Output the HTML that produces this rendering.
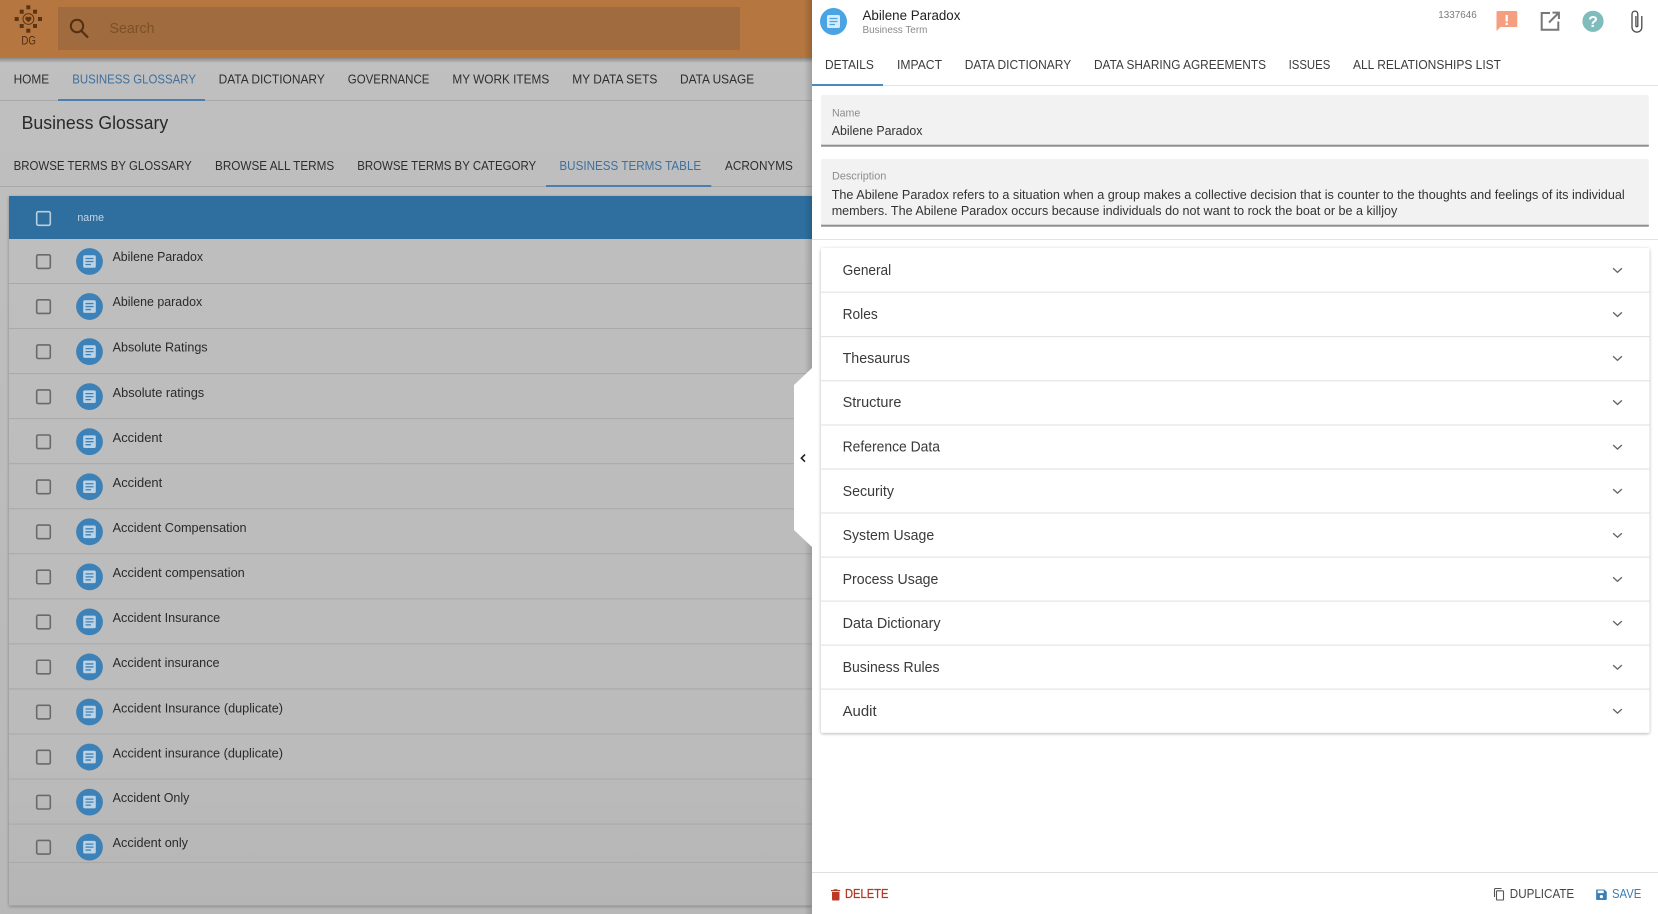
<!DOCTYPE html>
<html lang="en"><head><meta charset="utf-8"><title>Business Glossary</title>
<style>
html,body{margin:0;padding:0;background:#fff;width:1658px;height:914px;overflow:hidden}
svg{display:block;filter:blur(.3px)}
text{font-family:"Liberation Sans",sans-serif}
.nav{font-size:13px;fill:#2e2e2e}
.blue{fill:#3f709f}
.row{font-size:13px;fill:#2a2a2a}
.acc{font-size:14.5px;fill:#3a3a3a}
.tab{font-size:13px;fill:#3c3c3c}
.lab{font-size:11px;fill:#8c8c8c}
.val{font-size:13px;fill:#333}
</style></head><body>
<svg xmlns="http://www.w3.org/2000/svg" width="1658" height="914" viewBox="0 0 1658 914">
<defs>
<linearGradient id="pg" x1="0" y1="0" x2="0" y2="1"><stop offset="0" stop-color="#c0c0c0"/><stop offset="1" stop-color="#b8b8b8"/></linearGradient>
<linearGradient id="cd" x1="0" y1="0" x2="0" y2="1"><stop offset="0" stop-color="#bebebe"/><stop offset=".8" stop-color="#bbbbbb"/><stop offset="1" stop-color="#b5b5b5"/></linearGradient>
<linearGradient id="sh" x1="0" y1="0" x2="1" y2="0"><stop offset="0" stop-color="#000" stop-opacity="0"/><stop offset="1" stop-color="#000" stop-opacity=".16"/></linearGradient>
<linearGradient id="hs" x1="0" y1="0" x2="0" y2="1"><stop offset="0" stop-color="#000" stop-opacity=".28"/><stop offset="1" stop-color="#000" stop-opacity="0"/></linearGradient>
<filter id="cs" x="-2%" y="-2%" width="104%" height="104%"><feDropShadow dx="0" dy="1" stdDeviation="1.5" flood-color="#000" flood-opacity=".3"/></filter>
<symbol id="doc" viewBox="0 0 28 28" overflow="visible">
<circle cx="14" cy="14" r="13.4" fill="#3c82b8"/>
<rect x="7.7" y="7.7" width="12.6" height="12.6" rx="1.6" fill="#bdd3e4"/>
<path d="M10 11h8M10 14h8M10 17h5.5" stroke="#3c82b8" stroke-width="1.3" fill="none"/>
</symbol>
<symbol id="chev" viewBox="0 0 12 7" overflow="visible"><path d="M1.2 1.2L6 5.6l4.8-4.4" fill="none" stroke="#666" stroke-width="1.5"/></symbol>
</defs>

<!-- left background -->
<rect x="0" y="0" width="812" height="914" fill="url(#pg)"/>
<!-- app bar -->
<rect x="0" y="0" width="812" height="58" fill="#b5763f"/>
<rect x="0" y="58" width="812" height="5" fill="url(#hs)"/>
<rect x="58" y="7" width="682" height="43" fill="#a06b3e"/>
<!-- logo -->
<g fill="#5a3515">
<rect x="26.3" y="5.3" width="4" height="4"/><rect x="26.3" y="28.7" width="4" height="4"/>
<rect x="14.7" y="17" width="4" height="4"/><rect x="38" y="17" width="4" height="4"/>
<rect x="19.7" y="9.7" width="4" height="4"/><rect x="33" y="9.7" width="4" height="4"/>
<rect x="19.7" y="24" width="4" height="4"/><rect x="33" y="24" width="4" height="4"/>
<path d="M28.4 22c-2.2-1.4-3-2.7-3-3.8 0-1 .8-1.6 1.5-1.6.7 0 1.2.4 1.5 1 .3-.6.8-1 1.5-1 .7 0 1.5.6 1.5 1.6 0 1.1-.8 2.4-3 3.8z"/>
</g>
<circle cx="28.4" cy="19" r="5.4" fill="none" stroke="#5a3515" stroke-width="1"/>
<text x="21.4" y="44.6" font-size="11.5" fill="#4a2c12" textLength="14.4" lengthAdjust="spacingAndGlyphs">DG</text>
<!-- search -->
<circle cx="77" cy="26" r="6.2" fill="none" stroke="#552f10" stroke-width="2"/>
<path d="M81.5 31l6.5 6.5" stroke="#552f10" stroke-width="2.2" fill="none"/>
<text x="109.5" y="33" font-size="14.5" fill="#7d5029" textLength="45" lengthAdjust="spacingAndGlyphs">Search</text>

<!-- primary nav -->
<rect x="0" y="100" width="812" height="1" fill="#a9a9a9"/>
<rect x="58" y="99" width="147" height="2" fill="#4a7fb0"/>
<g class="nav">
<text class="nav" x="13.6" y="83.7" textLength="35.6" lengthAdjust="spacingAndGlyphs">HOME</text>
<text class="nav blue" x="72.2" y="83.7" textLength="123.8" lengthAdjust="spacingAndGlyphs">BUSINESS GLOSSARY</text>
<text class="nav" x="218.6" y="83.7" textLength="106.2" lengthAdjust="spacingAndGlyphs">DATA DICTIONARY</text>
<text class="nav" x="347.8" y="83.7" textLength="81.6" lengthAdjust="spacingAndGlyphs">GOVERNANCE</text>
<text class="nav" x="452.4" y="83.7" textLength="96.8" lengthAdjust="spacingAndGlyphs">MY WORK ITEMS</text>
<text class="nav" x="572.2" y="83.7" textLength="85.2" lengthAdjust="spacingAndGlyphs">MY DATA SETS</text>
<text class="nav" x="680" y="83.7" textLength="74.2" lengthAdjust="spacingAndGlyphs">DATA USAGE</text>
</g>
<text x="21.6" y="128.8" font-size="18" fill="#2a2a2a" textLength="146.6" lengthAdjust="spacingAndGlyphs">Business Glossary</text>

<!-- secondary tabs -->
<rect x="0" y="186" width="812" height="1" fill="#a9a9a9"/>
<rect x="546" y="185" width="165.3" height="2" fill="#4a7fb0"/>
<text class="nav" x="13.6" y="170.1" textLength="178.2" lengthAdjust="spacingAndGlyphs">BROWSE TERMS BY GLOSSARY</text>
<text class="nav" x="215" y="170.1" textLength="119.2" lengthAdjust="spacingAndGlyphs">BROWSE ALL TERMS</text>
<text class="nav" x="357.2" y="170.1" textLength="179" lengthAdjust="spacingAndGlyphs">BROWSE TERMS BY CATEGORY</text>
<text class="nav blue" x="559.4" y="170.1" textLength="141.8" lengthAdjust="spacingAndGlyphs">BUSINESS TERMS TABLE</text>
<text class="nav" x="725" y="170.1" textLength="67.9" lengthAdjust="spacingAndGlyphs">ACRONYMS</text>

<!-- table -->
<rect x="9" y="196" width="803" height="709.5" fill="url(#cd)" filter="url(#cs)"/>
<rect x="9" y="196" width="803" height="43" fill="#2f6f9f"/>
<rect x="36.7" y="211.7" width="13.6" height="13.6" rx="1.5" fill="none" stroke="#b9cfe0" stroke-width="1.6"/>
<text x="77.4" y="221" font-size="11" fill="#c6d6e4" textLength="26.6" lengthAdjust="spacingAndGlyphs">name</text>

<g id="rows">
<g><rect x="36.7" y="254.8" width="13.6" height="13.6" rx="1.5" fill="none" stroke="#6a6a6a" stroke-width="1.6"/><use href="#doc" x="75.5" y="247.5" width="28" height="28"/><text class="row" x="112.6" y="261.1" textLength="90.4" lengthAdjust="spacingAndGlyphs">Abilene Paradox</text><rect x="9" y="283" width="803" height="1" fill="#a8a8a8"/></g>
<g transform="translate(0,45.05)"><rect x="36.7" y="254.8" width="13.6" height="13.6" rx="1.5" fill="none" stroke="#6a6a6a" stroke-width="1.6"/><use href="#doc" x="75.5" y="247.5" width="28" height="28"/><text class="row" x="112.6" y="261.1" textLength="89.6" lengthAdjust="spacingAndGlyphs">Abilene paradox</text><rect x="9" y="283" width="803" height="1" fill="#a8a8a8"/></g>
<g transform="translate(0,90.1)"><rect x="36.7" y="254.8" width="13.6" height="13.6" rx="1.5" fill="none" stroke="#6a6a6a" stroke-width="1.6"/><use href="#doc" x="75.5" y="247.5" width="28" height="28"/><text class="row" x="112.6" y="261.4" textLength="95" lengthAdjust="spacingAndGlyphs">Absolute Ratings</text><rect x="9" y="283" width="803" height="1" fill="#a8a8a8"/></g>
<g transform="translate(0,135.15)"><rect x="36.7" y="254.8" width="13.6" height="13.6" rx="1.5" fill="none" stroke="#6a6a6a" stroke-width="1.6"/><use href="#doc" x="75.5" y="247.5" width="28" height="28"/><text class="row" x="112.6" y="261.8" textLength="91.6" lengthAdjust="spacingAndGlyphs">Absolute ratings</text><rect x="9" y="283" width="803" height="1" fill="#a8a8a8"/></g>
<g transform="translate(0,180.2)"><rect x="36.7" y="254.8" width="13.6" height="13.6" rx="1.5" fill="none" stroke="#6a6a6a" stroke-width="1.6"/><use href="#doc" x="75.5" y="247.5" width="28" height="28"/><text class="row" x="112.6" y="261.8" textLength="49.6" lengthAdjust="spacingAndGlyphs">Accident</text><rect x="9" y="283" width="803" height="1" fill="#a8a8a8"/></g>
<g transform="translate(0,225.25)"><rect x="36.7" y="254.8" width="13.6" height="13.6" rx="1.5" fill="none" stroke="#6a6a6a" stroke-width="1.6"/><use href="#doc" x="75.5" y="247.5" width="28" height="28"/><text class="row" x="112.6" y="261.8" textLength="49.6" lengthAdjust="spacingAndGlyphs">Accident</text><rect x="9" y="283" width="803" height="1" fill="#a8a8a8"/></g>
<g transform="translate(0,270.3)"><rect x="36.7" y="254.8" width="13.6" height="13.6" rx="1.5" fill="none" stroke="#6a6a6a" stroke-width="1.6"/><use href="#doc" x="75.5" y="247.5" width="28" height="28"/><text class="row" x="112.6" y="261.8" textLength="134" lengthAdjust="spacingAndGlyphs">Accident Compensation</text><rect x="9" y="283" width="803" height="1" fill="#a8a8a8"/></g>
<g transform="translate(0,315.35)"><rect x="36.7" y="254.8" width="13.6" height="13.6" rx="1.5" fill="none" stroke="#6a6a6a" stroke-width="1.6"/><use href="#doc" x="75.5" y="247.5" width="28" height="28"/><text class="row" x="112.6" y="261.8" textLength="132.2" lengthAdjust="spacingAndGlyphs">Accident compensation</text><rect x="9" y="283" width="803" height="1" fill="#a8a8a8"/></g>
<g transform="translate(0,360.4)"><rect x="36.7" y="254.8" width="13.6" height="13.6" rx="1.5" fill="none" stroke="#6a6a6a" stroke-width="1.6"/><use href="#doc" x="75.5" y="247.5" width="28" height="28"/><text class="row" x="112.6" y="261.8" textLength="107.6" lengthAdjust="spacingAndGlyphs">Accident Insurance</text><rect x="9" y="283" width="803" height="1" fill="#a8a8a8"/></g>
<g transform="translate(0,405.45)"><rect x="36.7" y="254.8" width="13.6" height="13.6" rx="1.5" fill="none" stroke="#6a6a6a" stroke-width="1.6"/><use href="#doc" x="75.5" y="247.5" width="28" height="28"/><text class="row" x="112.6" y="261.8" textLength="107" lengthAdjust="spacingAndGlyphs">Accident insurance</text><rect x="9" y="283" width="803" height="1" fill="#a8a8a8"/></g>
<g transform="translate(0,450.5)"><rect x="36.7" y="254.8" width="13.6" height="13.6" rx="1.5" fill="none" stroke="#6a6a6a" stroke-width="1.6"/><use href="#doc" x="75.5" y="247.5" width="28" height="28"/><text class="row" x="112.6" y="261.8" textLength="170.4" lengthAdjust="spacingAndGlyphs">Accident Insurance (duplicate)</text><rect x="9" y="283" width="803" height="1" fill="#a8a8a8"/></g>
<g transform="translate(0,495.55)"><rect x="36.7" y="254.8" width="13.6" height="13.6" rx="1.5" fill="none" stroke="#6a6a6a" stroke-width="1.6"/><use href="#doc" x="75.5" y="247.5" width="28" height="28"/><text class="row" x="112.6" y="261.8" textLength="170.4" lengthAdjust="spacingAndGlyphs">Accident insurance (duplicate)</text><rect x="9" y="283" width="803" height="1" fill="#a8a8a8"/></g>
<g transform="translate(0,540.6)"><rect x="36.7" y="254.8" width="13.6" height="13.6" rx="1.5" fill="none" stroke="#6a6a6a" stroke-width="1.6"/><use href="#doc" x="75.5" y="247.5" width="28" height="28"/><text class="row" x="112.6" y="261.5" textLength="76.7" lengthAdjust="spacingAndGlyphs">Accident Only</text><rect x="9" y="283" width="803" height="1" fill="#a8a8a8"/></g>
<g transform="translate(0,585.65)"><rect x="36.7" y="254.8" width="13.6" height="13.6" rx="1.5" fill="none" stroke="#6a6a6a" stroke-width="1.6"/><use href="#doc" x="75.5" y="247.5" width="28" height="28"/><text class="row" x="112.6" y="261.5" textLength="75.4" lengthAdjust="spacingAndGlyphs">Accident only</text></g>
<rect x="9" y="862" width="803" height="1" fill="#a8a8a8"/>
</g>

<!-- panel shadow + notch -->
<rect x="804" y="0" width="8" height="914" fill="url(#sh)"/>
<path d="M812 368L794 385V530L812 547Z" fill="#fff"/>
<path d="M805 454.5l-3.6 3.6 3.6 3.6" fill="none" stroke="#222" stroke-width="1.6"/>

<!-- right panel -->
<rect x="812" y="0" width="846" height="914" fill="#fff"/>
<circle cx="833.5" cy="21.5" r="13.5" fill="#4aa3e2"/>
<rect x="827" y="15" width="13" height="13" rx="1.6" fill="#d8ebf8"/>
<path d="M829.5 18.5h8M829.5 21.5h8M829.5 24.5h5.5" stroke="#4aa3e2" stroke-width="1.3" fill="none"/>
<text x="862.5" y="20" font-size="13.5" fill="#222" textLength="97.9" lengthAdjust="spacingAndGlyphs">Abilene Paradox</text>
<text x="862.5" y="33" font-size="10.5" fill="#8a8a8a" textLength="64.9" lengthAdjust="spacingAndGlyphs">Business Term</text>
<text x="1438.3" y="18" font-size="10" fill="#7a7a7a" textLength="38.4" lengthAdjust="spacingAndGlyphs">1337646</text>

<!-- alert -->
<path d="M1497.8 11h18.2a1.3 1.3 0 0 1 1.3 1.3v13.4a1.3 1.3 0 0 1-1.3 1.3h-15.5l-4 4V12.3a1.3 1.3 0 0 1 1.3-1.3z" fill="#f59e80"/>
<rect x="1505.6" y="15" width="2.2" height="6.5" fill="#fff"/><rect x="1505.6" y="22.8" width="2.2" height="2.2" fill="#fff"/>
<!-- open in new -->
<path d="M1550 13h-8.3v16.7h16.6V21.5" fill="none" stroke="#777" stroke-width="2"/>
<path d="M1549 22.5l9.5-9.5M1552.5 12.6h6.4v6.4" fill="none" stroke="#777" stroke-width="2"/>
<!-- help -->
<circle cx="1593" cy="21.3" r="10.6" fill="#7fbcbc"/>
<text x="1593" y="27.2" font-size="16" font-weight="bold" fill="#fff" text-anchor="middle">?</text>
<!-- clip -->
<path d="M1641.8 16V27.2a4.9 4.9 0 0 1-9.8 0V14a2.9 2.9 0 0 1 5.8 0V26a1 1 0 0 1-1.9 0V16" fill="none" stroke="#4a4a4a" stroke-width="1.3"/>

<!-- panel tabs -->
<rect x="812" y="85" width="846" height="1" fill="#e3e3e3"/>
<rect x="812" y="84" width="71" height="2" fill="#4a8ac0"/>
<text class="tab blue" x="825" y="69" textLength="48.8" lengthAdjust="spacingAndGlyphs">DETAILS</text>
<text class="tab" x="897" y="69" textLength="45" lengthAdjust="spacingAndGlyphs">IMPACT</text>
<text class="tab" x="964.7" y="69" textLength="106.5" lengthAdjust="spacingAndGlyphs">DATA DICTIONARY</text>
<text class="tab" x="1094" y="69" textLength="172" lengthAdjust="spacingAndGlyphs">DATA SHARING AGREEMENTS</text>
<text class="tab" x="1288.6" y="69" textLength="41.7" lengthAdjust="spacingAndGlyphs">ISSUES</text>
<text class="tab" x="1353" y="69" textLength="148" lengthAdjust="spacingAndGlyphs">ALL RELATIONSHIPS LIST</text>

<!-- fields -->
<rect x="821" y="95" width="827.8" height="51.7" rx="2" fill="#f2f2f2"/>
<rect x="821" y="144.7" width="827.8" height="2" fill="#8e8e8e"/>
<text class="lab" x="832" y="116.5" textLength="28.3" lengthAdjust="spacingAndGlyphs">Name</text>
<text class="val" x="831.7" y="135" textLength="90.8" lengthAdjust="spacingAndGlyphs">Abilene Paradox</text>

<rect x="821" y="159" width="827.8" height="67.7" rx="2" fill="#f2f2f2"/>
<rect x="821" y="224.7" width="827.8" height="2" fill="#8e8e8e"/>
<text class="lab" x="832" y="179.4" textLength="54.3" lengthAdjust="spacingAndGlyphs">Description</text>
<text class="val" x="831.7" y="199" textLength="793" lengthAdjust="spacingAndGlyphs">The Abilene Paradox refers to a situation when a group makes a collective decision that is counter to the thoughts and feelings of its individual</text>
<text class="val" x="831.7" y="215" textLength="565.6" lengthAdjust="spacingAndGlyphs">members. The Abilene Paradox occurs because individuals do not want to rock the boat or be a killjoy</text>
<rect x="812" y="239" width="846" height="1" fill="#e3e3e3"/>

<!-- accordion -->
<rect x="821" y="248" width="828.5" height="484.8" rx="2" fill="#fff" filter="url(#cs)"/>
<g fill="#e4e4e4">
<rect x="821" y="291.6" width="828.5" height="1.2"/><rect x="821" y="336" width="828.5" height="1.2"/>
<rect x="821" y="380.2" width="828.5" height="1.2"/><rect x="821" y="424.4" width="828.5" height="1.2"/>
<rect x="821" y="468.4" width="828.5" height="1.2"/><rect x="821" y="512.4" width="828.5" height="1.2"/>
<rect x="821" y="556.5" width="828.5" height="1.2"/><rect x="821" y="600.5" width="828.5" height="1.2"/>
<rect x="821" y="644.5" width="828.5" height="1.2"/><rect x="821" y="688.5" width="828.5" height="1.2"/>
</g>
<text class="acc" x="842.6" y="275" textLength="48.6" lengthAdjust="spacingAndGlyphs">General</text>
<text class="acc" x="842.6" y="319.1" textLength="35.1" lengthAdjust="spacingAndGlyphs">Roles</text>
<text class="acc" x="842.6" y="363.2" textLength="67.4" lengthAdjust="spacingAndGlyphs">Thesaurus</text>
<text class="acc" x="842.6" y="407" textLength="58.8" lengthAdjust="spacingAndGlyphs">Structure</text>
<text class="acc" x="842.6" y="451.6" textLength="97.4" lengthAdjust="spacingAndGlyphs">Reference Data</text>
<text class="acc" x="842.6" y="495.8" textLength="51.4" lengthAdjust="spacingAndGlyphs">Security</text>
<text class="acc" x="842.6" y="539.9" textLength="91.6" lengthAdjust="spacingAndGlyphs">System Usage</text>
<text class="acc" x="842.6" y="584" textLength="95.8" lengthAdjust="spacingAndGlyphs">Process Usage</text>
<text class="acc" x="842.6" y="627.8" textLength="98" lengthAdjust="spacingAndGlyphs">Data Dictionary</text>
<text class="acc" x="842.6" y="671.9" textLength="96.9" lengthAdjust="spacingAndGlyphs">Business Rules</text>
<text class="acc" x="842.6" y="716" textLength="34" lengthAdjust="spacingAndGlyphs">Audit</text>
<g>
<use href="#chev" x="1612" y="267.2" width="11" height="6.4"/>
<use href="#chev" x="1612" y="311.3" width="11" height="6.4"/>
<use href="#chev" x="1612" y="355.2" width="11" height="6.4"/>
<use href="#chev" x="1612" y="399.3" width="11" height="6.4"/>
<use href="#chev" x="1612" y="443.9" width="11" height="6.4"/>
<use href="#chev" x="1612" y="488" width="11" height="6.4"/>
<use href="#chev" x="1612" y="532.1" width="11" height="6.4"/>
<use href="#chev" x="1612" y="576.2" width="11" height="6.4"/>
<use href="#chev" x="1612" y="620" width="11" height="6.4"/>
<use href="#chev" x="1612" y="664" width="11" height="6.4"/>
<use href="#chev" x="1612" y="708" width="11" height="6.4"/>
</g>

<!-- footer -->
<rect x="812" y="872" width="846" height="1" fill="#e0e0e0"/>
<path d="M832 892h7.5v7.5a1 1 0 0 1-1 1H833a1 1 0 0 1-1-1zM831 890h2.2l.8-.8h3.2l.8.8h2.2v1.2h-9.2z" fill="#b93a26"/>
<text x="845" y="898" font-size="12.5" fill="#b23a28" stroke="#b23a28" stroke-width=".25" textLength="43.4" lengthAdjust="spacingAndGlyphs">DELETE</text>
<path d="M1501.5 888.5h-6a1 1 0 0 0-1 1v7.5" fill="none" stroke="#555" stroke-width="1.1"/>
<rect x="1496.5" y="890.8" width="7" height="9.2" rx=".8" fill="none" stroke="#555" stroke-width="1.1"/>
<text x="1509.8" y="898" font-size="12.5" fill="#444" textLength="64.4" lengthAdjust="spacingAndGlyphs">DUPLICATE</text>
<path d="M1597 889.5h7.4l2.4 2.4v7.2a.9.9 0 0 1-.9.9H1597a.9.9 0 0 1-.9-.9v-8.7a.9.9 0 0 1 .9-.9z" fill="#3d7fb5"/>
<rect x="1597.7" y="890.5" width="6" height="2.6" fill="#fff"/><circle cx="1601.4" cy="896.6" r="1.6" fill="#fff"/>
<text x="1612" y="898" font-size="12.5" fill="#3d7cb0" textLength="29.3" lengthAdjust="spacingAndGlyphs">SAVE</text>
</svg>
</body></html>
